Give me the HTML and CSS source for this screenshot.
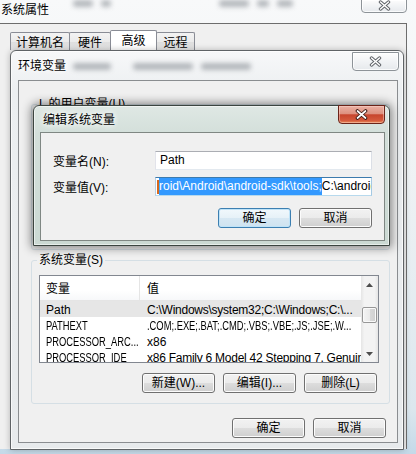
FILE: index.html
```html
<!DOCTYPE html>
<html lang="zh-CN">
<head>
<meta charset="utf-8">
<title>环境变量</title>
<link rel="stylesheet" href="styles.css">
</head>
<body>
<div class="sp">
  <div class="sp-title">
    <span class="sp-name">系统属性</span>
    <div class="haze-row top">
      <i class="blob w20"></i><i class="blob w10"></i><i class="blob w30 gap"></i><i class="blob w12"></i><i class="blob w16"></i>
    </div>
    <div class="cbtn inact sp-close">
      <svg width="13" height="11" viewBox="0 0 13 11"><path d="M2.5 2 L10.5 9 M10.5 2 L2.5 9" stroke="#5f6368" stroke-width="3.4" stroke-linecap="round"/><path d="M2.5 2 L10.5 9 M10.5 2 L2.5 9" stroke="#fff" stroke-width="1.5" stroke-linecap="round"/></svg>
    </div>
  </div>
  <div class="sp-client">
    <div class="tabs">
      <div class="tab t1">计算机名</div>
      <div class="tab t2">硬件</div>
      <div class="tab t3 sel">高级</div>
      <div class="tab t4">远程</div>
    </div>
  </div>
</div>

<div class="env">
  <div class="env-title">
    <span class="env-name">环境变量</span>
    <div class="haze-row mid"><i class="blob w38"></i><i class="blob w60 gap2"></i><i class="blob w50 gap3"></i></div>
    <div class="cbtn inact env-close">
      <svg width="13" height="11" viewBox="0 0 13 11"><path d="M2.5 2 L10.5 9 M10.5 2 L2.5 9" stroke="#5f6368" stroke-width="3.4" stroke-linecap="round"/><path d="M2.5 2 L10.5 9 M10.5 2 L2.5 9" stroke="#fff" stroke-width="1.5" stroke-linecap="round"/></svg>
    </div>
  </div>
  <div class="env-client">
    <fieldset class="fs user">
      <legend>L 的用户变量(U)</legend>
    </fieldset>
    <fieldset class="fs sys">
      <legend>系统变量(S)</legend>
      <div class="lv">
        <div class="lv-main">
          <div class="lv-head">
            <div class="c1">变量</div>
            <div class="c2">值</div>
          </div>
          <div class="row sel"><div class="c1">Path</div><div class="c2 tight">C:\Windows\system32;C:\Windows;C:\...</div></div>
          <div class="row"><div class="c1"><span class="sq">PATHEXT</span></div><div class="c2"><span class="sq">.COM;.EXE;.BAT;.CMD;.VBS;.VBE;.JS;.JSE;.W...</span></div></div>
          <div class="row"><div class="c1"><span class="sq">PROCESSOR_ARC...</span></div><div class="c2">x86</div></div>
          <div class="row"><div class="c1"><span class="sq">PROCESSOR_IDE</span></div><div class="c2 tight">x86 Family 6 Model 42 Stepping 7, GenuineIntel</div></div>
        </div>
        <div class="sb">
          <div class="sb-btn"><svg width="7" height="4" viewBox="0 0 7 4"><path d="M0 4 L3.5 0 L7 4Z" fill="#4d4d4d"/></svg></div>
          <div class="sb-track"><div class="sb-thumb"></div></div>
          <div class="sb-btn"><svg width="7" height="4" viewBox="0 0 7 4"><path d="M0 0 L3.5 4 L7 0Z" fill="#4d4d4d"/></svg></div>
        </div>
      </div>
      <div class="btn-row">
        <div class="btn">新建(W)...</div>
        <div class="btn">编辑(I)...</div>
        <div class="btn">删除(L)</div>
      </div>
    </fieldset>
    <div class="btn-row foot">
      <div class="btn">确定</div>
      <div class="btn">取消</div>
    </div>
  </div>
</div>

<div class="edit">
  <div class="edit-title">
    <span class="edit-name">编辑系统变量</span>
    <div class="cbtn red edit-close">
      <svg width="13" height="11" viewBox="0 0 13 11"><path d="M2.5 2 L10.5 9 M10.5 2 L2.5 9" stroke="#3a1a14" stroke-width="3.6" stroke-linecap="round"/><path d="M2.5 2 L10.5 9 M10.5 2 L2.5 9" stroke="#fff" stroke-width="1.7" stroke-linecap="round"/></svg>
    </div>
  </div>
  <div class="edit-client">
    <div class="field">
      <span class="lbl">变量名(N):</span>
      <div class="inp">Path</div>
    </div>
    <div class="field">
      <span class="lbl">变量值(V):</span>
      <div class="inp focus"><i class="caret"></i><span class="selt">roid\Android\android-sdk\tools;</span>C:\android-ndk</div>
    </div>
    <div class="btn-row dlg">
      <div class="btn def">确定</div>
      <div class="btn">取消</div>
    </div>
  </div>
</div>
</body>
</html>
```

FILE: styles.css
```css
* { box-sizing: border-box; margin: 0; padding: 0; }

body {
  width: 416px;
  height: 454px;
  overflow: hidden;
  position: relative;
  background: linear-gradient(180deg, #f8f9fa 0%, #eef2f4 40%, #dce7ee 90%, #c4d9e8 100%);
  font-family: "Liberation Sans", "Noto Sans CJK SC", sans-serif;
  font-size: 12px;
  color: #000;
}

/* ---------- outer window: 系统属性 ---------- */
.sp {
  position: absolute;
  left: 0;
  top: 0;
  width: 407px;
  height: 449px;
  display: flex;
  flex-direction: column;
}
.sp-title {
  height: 23px;
  display: flex;
  align-items: flex-start;
}
.sp-name {
  line-height: 17px;
  padding-left: 1px;
  font-family: "Noto Sans CJK SC", sans-serif;
}
.haze-row { display: flex; align-items: center; }
.haze-row.top { margin: 0 0 0 24px; height: 6px; flex: 1; }
.blob {
  display: block;
  height: 7px;
  border-radius: 3px;
  background: #9ea3a8;
  filter: blur(2.5px);
  opacity: .75;
  margin-right: 8px;
}
.w10 { width: 10px; } .w12 { width: 12px; } .w16 { width: 16px; }
.w20 { width: 20px; } .w30 { width: 30px; } .w38 { width: 38px; }
.w50 { width: 50px; } .w60 { width: 60px; }
.gap { margin-left: 100px; }
.gap2 { margin-left: 14px; }
.gap3 { margin-left: 0; }

.cbtn {
  display: flex;
  align-items: center;
  justify-content: center;
  flex: none;
}
.cbtn.inact {
  border: 1px solid #8d9398;
  border-radius: 0 0 4px 4px;
  background: linear-gradient(180deg, #fdfdfd 0%, #f1f3f5 50%, #e6e9ec 100%);
  box-shadow: inset 0 0 0 1px rgba(255,255,255,.8);
}
.sp-close {
  width: 46px;
  height: 14px;
  margin-left: auto;
  margin-top: -1px;
}
.sp-close svg { margin-top: -2px; }

.sp-client {
  flex: 1;
  background: #f0f0f0;
  border-top: 1px solid #6d6d6d;
  border-right: 1px solid #6d6d6d;
  padding-top: 6px;
}
.tabs {
  display: flex;
  align-items: flex-end;
  padding-left: 10px;
  height: 20px;
}
.tab {
  height: 18px;
  border: 1px solid #898c95;
  border-bottom: none;
  border-radius: 2px 2px 0 0;
  background: linear-gradient(180deg, #f3f3f3 0%, #ebebeb 50%, #dedede 51%, #e6e6e6 100%);
  text-align: center;
  line-height: 17px;
  font-family: "Noto Sans CJK SC", sans-serif;
  margin-left: -1px;
}
.t1 { width: 60px; margin-left: 0; }
.t2 { width: 42px; }
.t3 { width: 47px; }
.t4 { width: 39px; }
.tab.sel {
  height: 20px;
  background: #fff;
  line-height: 18px;
  position: relative;
}

/* ---------- 环境变量 dialog ---------- */
.env {
  position: absolute;
  left: 10px;
  top: 50px;
  width: 394px;
  height: 400px;
  border: 1px solid #5f6366;
  border-radius: 6px 6px 0 0;
  background: linear-gradient(180deg, #f7f8f9 0%, #eceff1 10%, #e7eaec 100%);
  box-shadow: 0 0 6px rgba(0,0,0,.25), inset 0 0 0 1px rgba(255,255,255,.7);
  display: flex;
  flex-direction: column;
}
.env-title {
  height: 29px;
  display: flex;
  align-items: flex-start;
  padding-left: 7px;
}
.env-name {
  line-height: 28px;
  font-family: "Noto Sans CJK SC", sans-serif;
  text-shadow: 0 0 6px #fff, 0 0 6px #fff;
}
.haze-row.mid { height: 30px; margin-left: 7px; }
.env-close {
  width: 47px;
  height: 19px;
  margin-left: auto;
  margin-right: 4px;
  margin-top: 1px;
}
.env-client {
  flex: 1;
  margin: 0 5px 6px 7px;
  background: #f0f0f0;
  border: 1px solid #8a8d90;
  padding: 15px 7px 0 12px;
}

.fs {
  border: 1px solid #d5dfe5;
  border-radius: 3px;
  padding: 0 10px 10px 7px;
  min-width: 0;
}
.fs legend {
  line-height: 16px;
  padding: 0 2px;
  margin-left: -2px;
}
.fs.user { height: 154px; margin-bottom: 2px; }

.lv {
  margin-top: 7px;
  height: 88px;
  border: 1px solid #828790;
  background: #fff;
  display: flex;
}
.lv-main { flex: 1; overflow: hidden; }
.lv-head {
  display: flex;
  height: 25px;
  border-bottom: 1px solid #e5e5e5;
  background: linear-gradient(180deg, #ffffff 0%, #ffffff 60%, #f7f8fa 100%);
  line-height: 27px;
}
.lv-head .c1 { border-right: 1px solid #e5e5e5; }
.c1 { width: 100px; padding-left: 6px; flex: none; white-space: nowrap; overflow: hidden; }
.c2 { flex: 1; padding-left: 7px; white-space: nowrap; overflow: hidden; }
.c2.tight { letter-spacing: -0.25px; }
.sq {
  display: inline-block;
  transform: scaleX(.78);
  transform-origin: 0 50%;
}
.row {
  display: flex;
  height: 16px;
  line-height: 18px;
}
.row.sel { background: #e6e6e6; }

.sb {
  width: 17px;
  flex: none;
  display: flex;
  flex-direction: column;
  background: linear-gradient(90deg, #e5e5e5 0%, #f3f3f3 20%, #f3f3f3 80%, #e5e5e5 100%);
}
.sb-btn {
  height: 17px;
  display: flex;
  align-items: center;
  justify-content: center;
}
.sb-track { flex: 1; }
.sb-thumb {
  margin: 14px 0 0 1px;
  width: 15px;
  height: 16px;
  border: 1px solid #979797;
  border-radius: 2px;
  background: linear-gradient(90deg, #f4f4f4 0%, #eaeaea 50%, #d9d9d9 51%, #d0d0d0 100%);
  box-shadow: inset 0 0 0 1px #fafafa;
}

.btn-row {
  display: flex;
  justify-content: flex-end;
  gap: 8px;
}
.fs.sys .btn-row { margin-top: 10px; padding-right: 2px; }
.btn-row.foot { margin-top: 14px; padding-right: 4px; }
.btn {
  width: 73px;
  height: 20px;
  border: 1px solid #707070;
  border-radius: 3px;
  background: linear-gradient(180deg, #f2f2f2 0%, #ebebeb 50%, #dddddd 51%, #cfcfcf 100%);
  box-shadow: inset 0 0 0 1px #fcfcfc;
  display: flex;
  align-items: center;
  justify-content: center;
  line-height: 16px;
}
.btn.def {
  border-color: #3c7fb1;
  background: linear-gradient(180deg, #f1f8fc 0%, #e6f1f8 50%, #d7e8f3 51%, #cfe3f0 100%);
  box-shadow: inset 0 0 0 1px #bfe3f8;
}

/* ---------- 编辑系统变量 dialog ---------- */
.edit {
  position: absolute;
  left: 33px;
  top: 105px;
  width: 357px;
  height: 141px;
  border: 1px solid #3b4540;
  border-radius: 6px 6px 0 0;
  background: linear-gradient(180deg, #dfe8e4 0%, #d3dfda 20%, #cbd9d3 100%);
  box-shadow: 0 0 10px 2px rgba(0,0,0,.45), inset 0 0 0 1px rgba(255,255,255,.55);
  display: flex;
  flex-direction: column;
}
.edit-title {
  height: 26px;
  display: flex;
  align-items: flex-start;
  padding-left: 9px;
}
.edit-name {
  line-height: 26px;
  font-family: "Noto Sans CJK SC", sans-serif;
  text-shadow: 0 0 6px #fff, 0 0 6px #fff;
}
.edit-close {
  width: 47px;
  height: 19px;
  margin-left: auto;
  margin-right: 4px;
  margin-top: -1px;
}
.cbtn.red {
  border: 1px solid #6a2419;
  border-radius: 0 0 4px 4px;
  background: linear-gradient(180deg, #eab1a4 0%, #de917f 45%, #c7452d 52%, #d45a3d 85%, #e98a56 100%);
  box-shadow: inset 0 0 0 1px rgba(255,220,210,.45);
}
.edit-client {
  flex: 1;
  margin: 0 4px 4px 6px;
  background: #f0f0f0;
  border: 1px solid #7f8783;
  padding: 18px 12px 0 12px;
}
.field {
  display: flex;
  align-items: center;
  margin-bottom: 7px;
}
.lbl {
  width: 102px;
  flex: none;
}
.inp {
  width: 218px;
  height: 19px;
  border: 1px solid;
  border-color: #abadb3 #dbdfe6 #e3e9ef #e2e3ea;
  background: #fff;
  padding-left: 4px;
  line-height: 17px;
  white-space: nowrap;
  overflow: hidden;
  display: flex;
  align-items: center;
}
.inp.focus {
  border-color: #3d7bad #a4c9e3 #b7d9ed #b5cfe7;
  padding-left: 1px;
}
.caret {
  display: block;
  width: 2px;
  height: 14px;
  background: #d5691f;
  flex: none;
}
.selt {
  background: #3399ff;
  color: #fff;
}
.btn-row.dlg { margin-top: 12px; }
```
